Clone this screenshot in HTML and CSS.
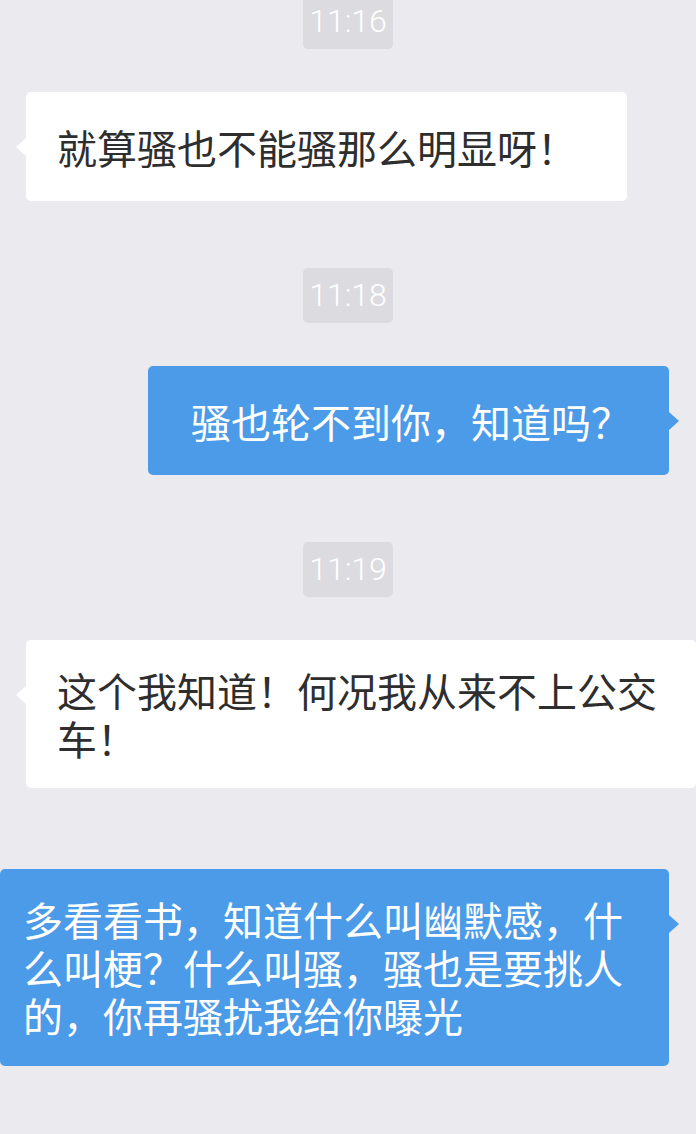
FILE: index.html
```html
<!DOCTYPE html>
<html lang="zh-CN">
<head>
  <meta charset="UTF-8">
  <meta name="viewport" content="width=device-width, initial-scale=1.0">
  <title>聊天记录</title>
  <link rel="stylesheet" href="styles.css">
</head>
<body>
  <div class="chat">
    <div class="time first"><span>11:16</span></div>
    <div class="row in">
      <div class="bubble">就算骚也不能骚那么明显呀！</div>
    </div>

    <div class="time"><span>11:18</span></div>
    <div class="row out">
      <div class="bubble">骚也轮不到你，知道吗？</div>
    </div>

    <div class="time"><span>11:19</span></div>
    <div class="row in">
      <div class="bubble long">这个我知道！何况我从来不上公交车！</div>
    </div>

    <div class="row out next">
      <div class="bubble long">多看看书，知道什么叫幽默感，什么叫梗？什么叫骚，骚也是要挑人的，你再骚扰我给你曝光</div>
    </div>
  </div>
</body>
</html>
```

FILE: styles.css
```css
body {
  margin: 0;
  padding: 0;
  background-color: #ebebef;
  font-family: "Noto Sans CJK SC", "Noto Sans", sans-serif;
  overflow: hidden;
}

.chat {
  width: 696px;
  height: 1134px;
}

/* time stamps */
.time {
  display: flex;
  justify-content: center;
  margin: 67px 0 43px;
}

.time.first {
  margin-top: -6px;
}

.time span {
  width: 90px;
  height: 55px;
  line-height: 55px;
  text-align: center;
  background-color: #dcdce0;
  color: #fff;
  border-radius: 5px;
  font-family: Roboto, "Noto Sans", sans-serif;
  font-size: 32px;
  font-weight: 300;
}

/* message rows */
.row {
  display: flex;
}

.row.in {
  padding-left: 26px;
}

.row.out {
  justify-content: flex-end;
  padding-right: 27px;
}

.row.next {
  margin-top: 81px;
}

.bubble {
  position: relative;
  box-sizing: border-box;
  min-height: 109px;
  display: flex;
  align-items: center;
  font-size: 40px;
  line-height: 48px;
  border-radius: 5px;
  padding: 26px 0 26px;
}

.bubble.long {
  display: block;
}

.in .bubble {
  background-color: #fff;
  color: #2e2e2e;
  padding-left: 31px;
  padding-right: 50px;
}

.in .bubble.long {
  padding-right: 38px;
}

.out .bubble {
  background-color: #4c9be8;
  color: #fff;
  padding-left: 43px;
  padding-right: 38px;
}

.out .bubble.long {
  padding-left: 23px;
  padding-right: 45px;
  padding-bottom: 27px;
}

/* little arrows */
.bubble::before {
  content: "";
  position: absolute;
  top: 46px;
  border-top: 9px solid transparent;
  border-bottom: 9px solid transparent;
}

.in .bubble::before {
  left: -10px;
  border-right: 10px solid #fff;
}

.out .bubble::before {
  right: -10px;
  border-left: 10px solid #4c9be8;
}
```
